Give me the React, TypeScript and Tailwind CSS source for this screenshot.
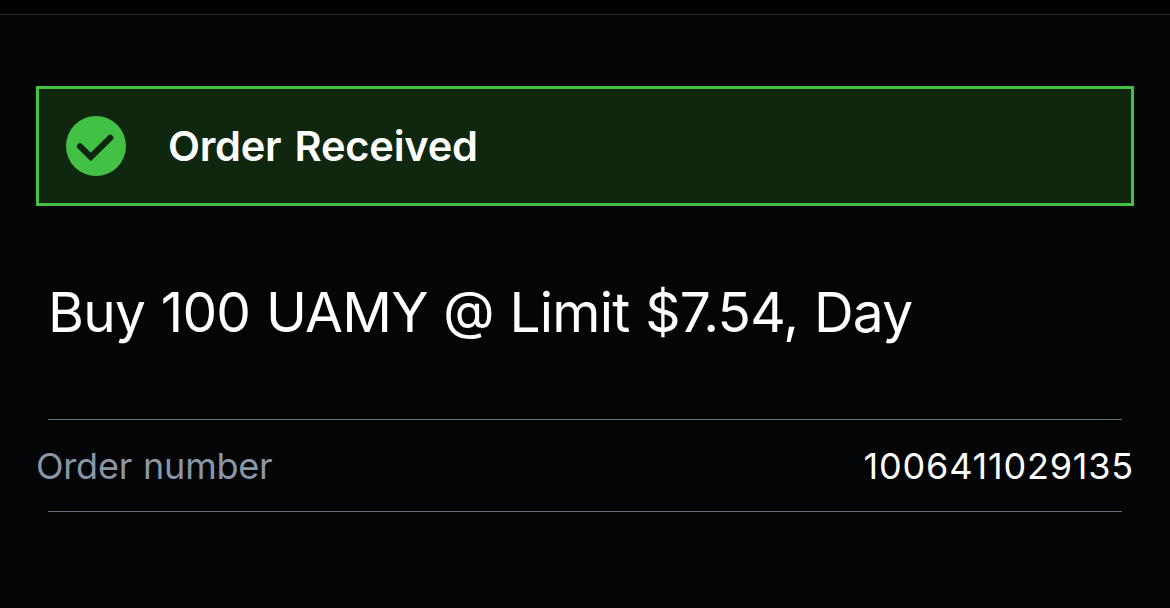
const order = {
  status: "Order Received",
  action: "Buy 100 UAMY",
  terms: "Limit $7.54, Day",
  number: "1006411029135",
};

function CheckBadge() {
  return (
    <svg viewBox="0 0 60 60" className="h-[60px] w-[60px] shrink-0" aria-hidden="true">
      <circle cx="30" cy="30" r="30" fill="#43c145" />
      <path d="M14 30.4 L24.8 41 L44.2 21.9" fill="none" stroke="#0f260f" strokeWidth="6.2" strokeLinecap="round" />
    </svg>
  );
}

export default function App() {
  return (
    <div className="flex h-screen flex-col overflow-hidden bg-[#030507] font-['Inter',sans-serif] text-white [font-feature-settings:'calt'_0]">
      <header className="h-[15px] shrink-0 border-b border-[#2a2a2a] bg-black" />
      <main className="flex flex-col px-9 pt-[71px]">
        <div className="flex h-[120px] items-center gap-[42px] border-[3px] border-[#43c143] bg-[#0f260f] pl-[27px]">
          <CheckBadge />
          <h1 className="pt-[2px] text-[41.6px] leading-none font-semibold tracking-[-0.25px] whitespace-nowrap [word-spacing:3px]">
            {order.status}
          </h1>
        </div>
        <p className="mt-[70px] h-[72px] pl-3 text-[55px] leading-[72px] tracking-[-0.75px] whitespace-nowrap [word-spacing:0.9px]">
          {order.action} <span className="inline-block -translate-y-[3px] text-[53px] leading-none">@</span> {order.terms}
        </p>
        <div className="mx-3 mt-[71px] h-px bg-[#66727a]" />
        <dl className="flex h-[91px] items-center justify-between text-[36px] whitespace-nowrap">
          <dt className="tracking-[-0.2px] text-[#8a97a5] [word-spacing:1px]">Order number</dt>
          <dd className="tracking-[0.8px]">{order.number}</dd>
        </dl>
        <div className="mx-3 h-px bg-[#66727a]" />
      </main>
    </div>
  );
}
